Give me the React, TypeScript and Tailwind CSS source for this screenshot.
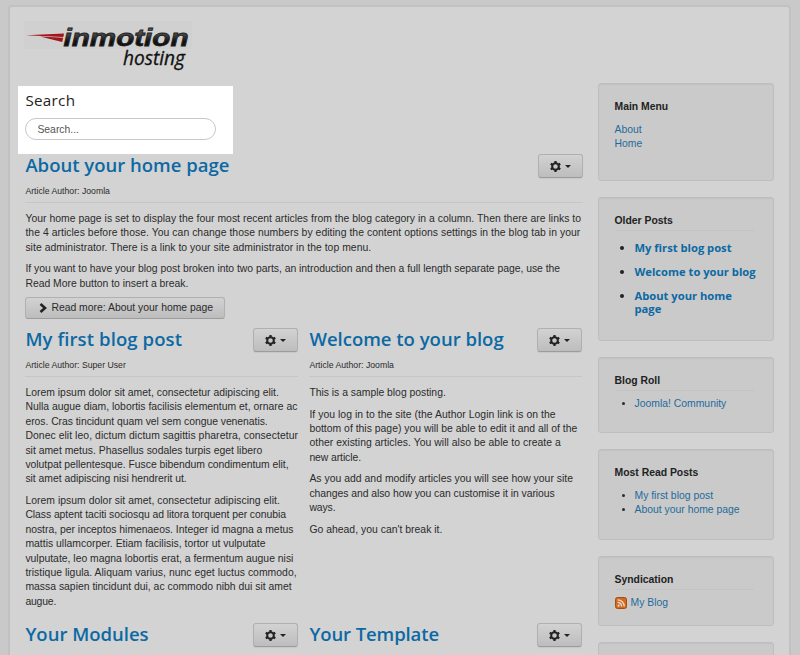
import type { ReactNode } from "react";

type Row = [text: string, stretch: number];

/** A paragraph of fixed lines; `stretch` is the extra width in pixels spread over the line's letters. */
function Lines({ rows }: { rows: Row[] }) {
  return (
    <p className="mb-[7.2px]">
      {rows.map(([text, stretch]) => (
        <span key={text} className="block whitespace-nowrap" style={{ letterSpacing: `${(stretch / text.length).toFixed(4)}px` }}>
          {text}
        </span>
      ))}
    </p>
  );
}

function GearButton() {
  return (
    <button className="flex h-[24px] w-[45px] shrink-0 items-center justify-center gap-[4px] rounded-[3px] border border-[#b0b0b0] border-b-[#9c9c9c] bg-linear-to-b from-[#d2d2d2] to-[#bdbdbd] shadow-[0_1px_1px_rgba(0,0,0,0.06)]">
      <svg width="11" height="11" viewBox="0 0 22 22" fill="none" stroke="#222">
        <circle cx="11" cy="11" r="6.6" strokeWidth="4" />
        <g strokeWidth="4.4">
          <path d="M11 0v4M11 18v4M1.5 5.5l3.4 2M17.1 14.5l3.4 2M1.5 16.5l3.4-2M17.1 7.5l3.4-2" />
        </g>
      </svg>
      <span className="mt-[1px] h-0 w-0 border-x-[3.5px] border-t-[3.5px] border-x-transparent border-t-[#222]" />
    </button>
  );
}

function ArticleHead({ title, author, tracking = "" }: { title: string; author?: string; tracking?: string }) {
  return (
    <header className={author ? "mb-[9px] h-[49px] border-b border-[#c6c6c6]" : ""}>
      <div className="flex items-start justify-between">
        <h2 className={"font-['Open_Sans',sans-serif] text-[18.5px] leading-[21px] font-semibold whitespace-nowrap text-[#0c69a3] " + tracking}>
          {title}
        </h2>
        <GearButton />
      </div>
      {author && <div className="mt-[6px] text-[8.7px] leading-[14px]">Article Author: {author}</div>}
    </header>
  );
}

function Card({ title, height, children, rule }: { title?: string; height: string; children?: ReactNode; rule?: boolean }) {
  return (
    <section className={"shrink-0 rounded-[3px] border border-[#bebebe] bg-[#cacaca] px-[15.5px] pt-[15px] shadow-[inset_0_1px_1px_rgba(0,0,0,0.04)] " + height}>
      {title && (
        <h3 className={"mr-[4px] mb-[6px] h-[18px] text-[10.4px] leading-[15px] font-bold text-[#222] " + (rule ? "border-b border-[#c3c3c3]" : "")}>
          {title}
        </h3>
      )}
      {children}
    </section>
  );
}

export default function App() {
  return (
    <div className="h-[655px] w-[800px] overflow-hidden bg-[#c9c9c9] pt-[5px] pl-[8px] font-['Liberation_Sans',Arial,sans-serif] text-[10.4px] leading-[14.4px] text-[#2b2b2b]">
      <div className="h-[670px] w-[783px] rounded-[4px] border-2 border-[#c1c1c1] bg-[#d3d3d3] pl-[8px]">
        <div className="h-[76px] pt-[13px] pl-[6px]">
          <svg width="170" height="62" viewBox="24 20 170 62">
            <defs>
              <linearGradient id="ink" x1="0" y1="0" x2="0" y2="1">
                <stop offset="0.3" stopColor="#555" />
                <stop offset="0.65" stopColor="#111" />
              </linearGradient>
            </defs>
            <rect x="24" y="21" width="168" height="28" fill="#d0d0d0" />
            <path d="M26 35.2 64 33.4 63.4 37z" fill="#a3151d" />
            <path d="M40 36.4 63.2 37.8 62.2 42z" fill="#a3151d" />
            <text x="63.5" y="46" textLength="125" lengthAdjust="spacingAndGlyphs" fontFamily="Liberation Sans" fontSize="24.5" fontWeight="700" fontStyle="italic" fill="url(#ink)" stroke="#222" strokeWidth="0.8">
              inmotion
            </text>
            <text x="123" y="65" textLength="62" lengthAdjust="spacingAndGlyphs" fontFamily="Open Sans" fontSize="19.5" fontStyle="italic" fill="#111" stroke="#111" strokeWidth="0.3">
              hosting
            </text>
          </svg>
        </div>

        <div className="flex gap-[15px]">
          <main className="w-[565px] shrink-0 pt-[3px]">
            <section className="h-[68px] w-[215px] bg-white pt-[4px] pl-[7.4px]">
              <h2 className="font-['Open_Sans',sans-serif] text-[15.2px] leading-[20px] font-normal tracking-[0.3px] text-[#222]">Search</h2>
              <div className="mt-[8px] flex h-[22px] w-[191px] items-center rounded-full border border-[#c8c8c8] pt-[2px] pl-[11px] text-[10.4px] text-[#555]">
                Search...
              </div>
            </section>

            <div className="pl-[7.4px]">
              <article className="h-[174px]">
                <ArticleHead title="About your home page" author="Joomla" />
                <Lines
                  rows={[
                    ["Your home page is set to display the four most recent articles from the blog category in a column. Then there are links to", 3.5],
                    ["the 4 articles before those. You can change those numbers by editing the content options settings in the blog tab in your", 5],
                    ["site administrator. There is a link to your site administrator in the top menu.", 3],
                  ]}
                />
                <Lines
                  rows={[
                    ["If you want to have your blog post broken into two parts, an introduction and then a full length separate page, use the", -2.5],
                    ["Read More button to insert a break.", -0.5],
                  ]}
                />
                <button className="-mt-[1.2px] flex h-[22px] w-[200px] items-center rounded-[3px] border border-[#b0b0b0] border-b-[#9c9c9c] bg-linear-to-b from-[#d2d2d2] to-[#bdbdbd] pl-[13px]">
                  <svg width="9" height="10" viewBox="0 0 9 10" fill="none" stroke="#222" strokeWidth="2.6">
                    <path d="M1.5 1 6 5 1.5 9" />
                  </svg>
                  <span className="ml-[3px] whitespace-nowrap">Read more: About your home page</span>
                </button>
              </article>

              <div className="flex h-[295px] gap-[11px]">
                <article className="w-[273px]">
                  <ArticleHead title="My first blog post" author="Super User" tracking="tracking-[0.1px]" />
                  <Lines
                    rows={[
                      ["Lorem ipsum dolor sit amet, consectetur adipiscing elit.", 0.5],
                      ["Nulla augue diam, lobortis facilisis elementum et, ornare ac", 0],
                      ["eros. Cras tincidunt quam vel sem congue venenatis.", -2],
                      ["Donec elit leo, dictum dictum sagittis pharetra, consectetur", 3.5],
                      ["sit amet metus. Phasellus sodales turpis eget libero", 0],
                      ["volutpat pellentesque. Fusce bibendum condimentum elit,", -2],
                      ["sit amet adipiscing nisi hendrerit ut.", -1],
                    ]}
                  />
                  <Lines
                    rows={[
                      ["Lorem ipsum dolor sit amet, consectetur adipiscing elit.", 1.5],
                      ["Class aptent taciti sociosqu ad litora torquent per conubia", -3.5],
                      ["nostra, per inceptos himenaeos. Integer id magna a metus", -0.5],
                      ["mattis ullamcorper. Etiam facilisis, tortor ut vulputate", 0.5],
                      ["vulputate, leo magna lobortis erat, a fermentum augue nisi", 0],
                      ["tristique ligula. Aliquam varius, nunc eget luctus commodo,", 1.5],
                      ["massa sapien tincidunt dui, ac commodo nibh dui sit amet", 0],
                      ["augue.", -1],
                    ]}
                  />
                </article>
                <article className="w-[273px]">
                  <ArticleHead title="Welcome to your blog" author="Joomla" />
                  <Lines rows={[["This is a sample blog posting.", -0.5]]} />
                  <Lines
                    rows={[
                      ["If you log in to the site (the Author Login link is on the", 2.5],
                      ["bottom of this page) you will be able to edit it and all of the", 0.5],
                      ["other existing articles. You will also be able to create a", 2.5],
                      ["new article.", -1],
                    ]}
                  />
                  <Lines
                    rows={[
                      ["As you add and modify articles you will see how your site", 1.5],
                      ["changes and also how you can customise it in various", -2.5],
                      ["ways.", -0.5],
                    ]}
                  />
                  <Lines rows={[["Go ahead, you can't break it.", 0.5]]} />
                </article>
              </div>

              <div className="flex gap-[11px]">
                <article className="w-[273px]">
                  <ArticleHead title="Your Modules" />
                </article>
                <article className="w-[273px]">
                  <ArticleHead title="Your Template" tracking="tracking-[-0.1px]" />
                </article>
              </div>
            </div>
          </main>

          <aside className="flex w-[176px] shrink-0 flex-col gap-[16px]">
            <Card title="Main Menu" height="h-[98px]">
              <div className="text-[#1f6a9c]">About</div>
              <div className="text-[#1f6a9c]">Home</div>
            </Card>
            <Card title="Older Posts" height="h-[144px]" rule>
              <ul className="mt-[10px] ml-[20px] list-disc space-y-[11px] font-['Open_Sans',sans-serif] text-[11.2px] leading-[13px] font-bold whitespace-nowrap text-[#222]">
                <li><span className="text-[#0c69a3]">My first blog post</span></li>
                <li><span className="text-[#0c69a3]">Welcome to your blog</span></li>
                <li><span className="text-[#0c69a3]">About your home<br />page</span></li>
              </ul>
            </Card>
            <Card title="Blog Roll" height="h-[76px]" rule>
              <ul className="ml-[20px] list-disc">
                <li><span className="text-[#1f6a9c]">Joomla! Community</span></li>
              </ul>
            </Card>
            <Card title="Most Read Posts" height="h-[91px]">
              <ul className="ml-[20px] list-disc">
                <li><span className="text-[#1f6a9c]">My first blog post</span></li>
                <li><span className="text-[#1f6a9c]">About your home page</span></li>
              </ul>
            </Card>
            <Card title="Syndication" height="h-[70px]" rule>
              <div className="flex items-center gap-[4px] text-[#1f6a9c]">
                <svg width="12" height="12" viewBox="0 0 12 12">
                  <rect x="0.5" y="0.5" width="11" height="11" rx="2" fill="#d2691e" stroke="#a84c10" />
                  <circle cx="3.6" cy="8.6" r="1.1" fill="#e8e0d8" />
                  <path d="M2.6 5.4a4 4 0 0 1 4 4M2.6 2.8a6.6 6.6 0 0 1 6.6 6.6" fill="none" stroke="#e8e0d8" strokeWidth="1.3" />
                </svg>
                My Blog
              </div>
            </Card>
            <Card height="h-[60px]" />
          </aside>
        </div>
      </div>
    </div>
  );
}
